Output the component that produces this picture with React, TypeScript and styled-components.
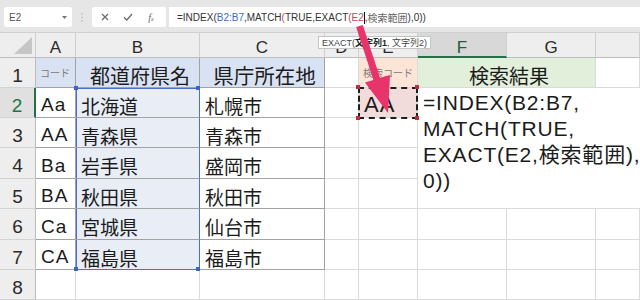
import React from "react";
import styled, { createGlobalStyle } from "styled-components";

const FONT = `"Liberation Sans", "Noto Sans CJK JP", sans-serif`;

const Global = createGlobalStyle`
  html, body { margin: 0; padding: 0; background: #fff; }
  body { width: 640px; height: 300px; overflow: hidden; font-family: ${FONT}; }
`;

const Screen = styled.div`
  position: relative;
  width: 640px;
  height: 300px;
  overflow: hidden;
  background: #fff;
  font-family: ${FONT};
`;

/* ---------- formula bar ---------- */
const FormulaBar = styled.div`
  box-sizing: border-box;
  display: flex;
  align-items: stretch;
  height: 33px;
  padding: 7px 0 5px 4px;
  background: #e6e6e6;
  border-bottom: 1px solid #d0d0d0;
`;

const NameBox = styled.div`
  box-sizing: border-box;
  width: 68px;
  display: flex;
  align-items: center;
  justify-content: space-between;
  padding: 0 5px 0 5px;
  background: #fff;
  border-radius: 2px;
  font-size: 10px;
  color: #555;
`;

const Separator = styled.div`
  width: 20px;
  display: flex;
  align-items: center;
  justify-content: center;
`;

const ButtonBox = styled.div`
  box-sizing: border-box;
  width: 74px;
  display: flex;
  align-items: center;
  gap: 13px;
  padding-left: 8px;
  background: #fff;
  border-radius: 2px;
`;

const IconSlot = styled.span`
  width: 10px;
  height: 10px;
  display: flex;
  align-items: center;
  justify-content: center;
  color: #6a6a6a;
`;

const Fx = styled.span`
  font-family: "Liberation Serif", serif;
  font-style: italic;
  font-size: 10px;
  color: #6a6a6a;
  & > small { font-size: 6px; }
`;

const FormulaInput = styled.div`
  flex: 1;
  margin-left: 3px;
  display: flex;
  align-items: center;
  padding-left: 8px;
  background: #fff;
  font-size: 10px;
  color: #333;
  white-space: nowrap;
`;

const Ref = styled.span<{ $c: string }>`
  color: ${(p) => p.$c};
`;

const Caret = styled.span`
  display: inline-block;
  width: 1px;
  height: 12px;
  background: #111;
  margin: 0 0 -2px 0;
`;

/* ---------- sheet ---------- */
const Sheet = styled.div`
  display: grid;
  grid-template-columns: 36px 40px 124px 125px 34px 59px 89px 89px 44px;
  grid-template-rows: 25px 30px 30px 30px 31px 30px 31px 30px 30px;
`;

const HeaderCell = styled.div<{ $active?: boolean }>`
  box-sizing: border-box;
  display: flex;
  align-items: center;
  justify-content: center;
  padding-top: 6px;
  background: ${(p) => (p.$active ? "#d8d8d8" : "#eeeeee")};
  border-right: 1px solid #cfcfcf;
  border-bottom: ${(p) => (p.$active ? "2px solid #217346" : "1px solid #bdbdbd")};
  font-size: 17px;
  color: ${(p) => (p.$active ? "#1f5e3a" : "#2a2a2a")};
`;

const Corner = styled(HeaderCell)`
  position: relative;
  &::after {
    content: "";
    position: absolute;
    right: 3px;
    bottom: 3px;
    width: 18px;
    height: 17px;
    background: #c6c6c6;
    clip-path: polygon(100% 0, 100% 100%, 0 100%);
  }
`;

const RowHead = styled.div<{ $active?: boolean }>`
  box-sizing: border-box;
  display: flex;
  align-items: center;
  justify-content: center;
  padding-top: 6px;
  background: ${(p) => (p.$active ? "#e0e0e0" : "#eeeeee")};
  border-right: ${(p) => (p.$active ? "2px solid #217346" : "1px solid #bdbdbd")};
  border-bottom: 1px solid #d2d2d2;
  font-size: 19px;
  color: ${(p) => (p.$active ? "#217346" : "#2a2a2a")};
`;

const Cell = styled.div<{
  $bg?: string;
  $tb?: boolean;
  $center?: boolean;
  $small?: boolean;
  $size?: number;
  $spacing?: number;
  $span?: number;
}>`
  box-sizing: border-box;
  display: flex;
  align-items: center;
  justify-content: ${(p) => (p.$center ? "center" : "flex-start")};
  padding: ${(p) => (p.$small ? "0 0 0 4px" : "5px 0 0 5px")};
  grid-column: ${(p) => (p.$span ? `span ${p.$span}` : "auto")};
  background: ${(p) => p.$bg ?? "transparent"};
  border-right: 1px solid ${(p) => (p.$tb ? "#a2a2a2" : "#dadada")};
  border-bottom: 1px solid ${(p) => (p.$tb ? "#a2a2a2" : "#dadada")};
  font-size: ${(p) => (p.$small ? 10 : p.$size ?? 19)}px;
  color: ${(p) => (p.$small ? "#7a7a7a" : "#1b1b1b")};
  letter-spacing: ${(p) => p.$spacing ?? 0}px;
  white-space: nowrap;
`;

const SelCell = styled(Cell)<{ $first?: boolean; $last?: boolean }>`
  position: relative;
  z-index: ${(p) => (p.$first ? 3 : 1)};
  background: #e8edf6;
  border-right: 1px solid #4a72c4;
  border-bottom: 1px solid ${(p) => (p.$last ? "#4a72c4" : "#a2a2a2")};
  box-shadow: inset 1px 0 0 #4a72c4 ${(p) => (p.$first ? ", inset 0 1px 0 #4a72c4" : "")};
  &::after {
    content: ${(p) => (p.$first ? '""' : "none")};
    position: absolute;
    left: -2px;
    top: -2px;
    width: 4px;
    height: 4px;
    background: #3a66bd;
    box-shadow: 122px 0 0 #3a66bd, 0 181px 0 #3a66bd, 122px 181px 0 #3a66bd;
  }
`;

const PickCell = styled(Cell)`
  position: relative;
  z-index: 3;
  &::before {
    content: "";
    position: absolute;
    left: -1px;
    top: -1px;
    right: -1px;
    bottom: -2px;
    border: 2px dashed #1e1e1e;
  }
  &::after {
    content: "";
    position: absolute;
    left: -3px;
    top: -3px;
    width: 4px;
    height: 4px;
    background: #b8303c;
    box-shadow: 59px 0 0 #b8303c, 0 31px 0 #b8303c, 59px 31px 0 #b8303c;
  }
`;

const MergedFormula = styled.div`
  box-sizing: border-box;
  grid-column: span 3;
  grid-row: span 4;
  padding: 2px 0 0 5px;
  border-bottom: 1px solid #dadada;
  font-size: 21px;
  line-height: 26px;
  letter-spacing: 0.8px;
  color: #1b1b1b;
  white-space: pre;
`;

/* ---------- overlays ---------- */
const Tooltip = styled.div`
  position: absolute;
  left: 318px;
  top: 36px;
  height: 13px;
  box-sizing: border-box;
  display: flex;
  align-items: center;
  padding: 0 3px;
  background: #fff;
  border: 1px solid #c4c4c4;
  font-size: 9px;
  color: #444;
  white-space: nowrap;
  z-index: 5;
  & > b { font-weight: 700; color: #222; }
`;

const ArrowLayer = styled.svg`
  position: absolute;
  left: 0;
  top: 0;
  z-index: 6;
  pointer-events: none;
`;

const letters = ["A", "B", "C", "D", "E", "F", "G"];
const rows = [
  ["Aa", "北海道", "札幌市"],
  ["AA", "青森県", "青森市"],
  ["Ba", "岩手県", "盛岡市"],
  ["BA", "秋田県", "秋田市"],
  ["Ca", "宮城県", "仙台市"],
  ["CA", "福島県", "福島市"],
];

const formula = "=INDEX(B2:B7,\nMATCH(TRUE,\nEXACT(E2,検索範囲),\n0))";

export default function App() {
  return (
    <Screen>
      <Global />
      <FormulaBar>
        <NameBox>
          <span>E2</span>
          <svg width="5" height="3" viewBox="0 0 5 3">
            <path d="M0 0 H5 L2.5 3 Z" fill="#777" />
          </svg>
        </NameBox>
        <Separator>
          <svg width="2" height="9" viewBox="0 0 2 9">
            <circle cx="1" cy="1" r="0.8" fill="#b5b5b5" />
            <circle cx="1" cy="4.5" r="0.8" fill="#b5b5b5" />
            <circle cx="1" cy="8" r="0.8" fill="#b5b5b5" />
          </svg>
        </Separator>
        <ButtonBox>
          <IconSlot>
            <svg width="8" height="8" viewBox="0 0 8 8">
              <path d="M1 1 L7 7 M7 1 L1 7" stroke="#6a6a6a" strokeWidth="1.2" />
            </svg>
          </IconSlot>
          <IconSlot>
            <svg width="10" height="8" viewBox="0 0 10 8">
              <path d="M1 4.2 L3.8 7 L9 1" stroke="#6a6a6a" strokeWidth="1.3" fill="none" />
            </svg>
          </IconSlot>
          <IconSlot>
            <Fx>
              f<small>x</small>
            </Fx>
          </IconSlot>
        </ButtonBox>
        <FormulaInput>
          =INDEX(<Ref $c="#3d6bbf">B2:B7</Ref>,MATCH<Ref $c="#c9465a">(</Ref>TRUE,EXACT
          <Ref $c="#c9465a">(E2</Ref>
          <Caret />
          ,<Ref $c="#666">検索範囲</Ref>),0))
        </FormulaInput>
      </FormulaBar>

      <Sheet>
        <Corner />
        {letters.map((l) => (
          <HeaderCell key={l} $active={l === "F"}>
            {l}
          </HeaderCell>
        ))}
        <HeaderCell />

        <RowHead>1</RowHead>
        <Cell $bg="#d9e2f3" $tb $small>
          コード
        </Cell>
        <Cell $bg="#d9e2f3" $tb $center $size={20}>
          都道府県名
        </Cell>
        <Cell $bg="#d9e2f3" $tb $center $size={20.5}>
          県庁所在地
        </Cell>
        <Cell />
        <Cell $bg="#fce4d6" $small>
          検索コード
        </Cell>
        <Cell $bg="#e2efda" $center $span={2} $size={20}>
          検索結果
        </Cell>
        <Cell />

        {rows.map((r, i) => (
          <React.Fragment key={r[0]}>
            <RowHead $active={i === 0}>{i + 2}</RowHead>
            <Cell $tb $size={19} $spacing={1}>
              {r[0]}
            </Cell>
            <SelCell $tb $first={i === 0} $last={i === 5}>
              {r[1]}
            </SelCell>
            <Cell $tb>{r[2]}</Cell>
            <Cell />
            {i === 0 ? (
              <PickCell $bg="#f2dcdb" $size={22} $spacing={1}>
                AA
              </PickCell>
            ) : (
              <Cell />
            )}
            {i === 0 && <MergedFormula>{formula}</MergedFormula>}
            {i >= 4 && (
              <>
                <Cell />
                <Cell />
                <Cell />
              </>
            )}
          </React.Fragment>
        ))}

        <RowHead>8</RowHead>
        {Array.from({ length: 8 }, (_, k) => (
          <Cell key={k} />
        ))}
      </Sheet>

      <Tooltip>
        EXACT(<b>文字列1</b>, 文字列2)
      </Tooltip>

      <ArrowLayer width="640" height="300" viewBox="0 0 640 300">
        <line x1="359.5" y1="26" x2="379" y2="86" stroke="#e8336b" strokeWidth="7" />
        <polygon points="388,113 365,82.5 390,75" fill="#e8336b" />
      </ArrowLayer>
    </Screen>
  );
}
